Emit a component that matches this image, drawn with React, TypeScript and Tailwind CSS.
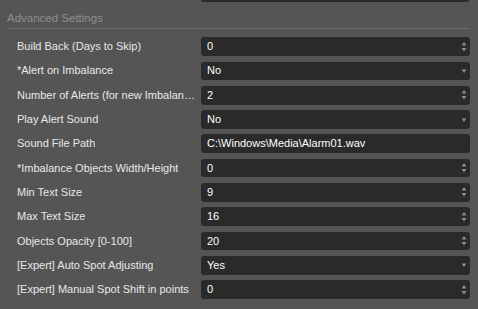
type Field = {
  label: string;
  value: string;
  kind: "spin" | "select" | "text";
};

const FIELDS: Field[] = [
  { label: "Build Back (Days to Skip)", value: "0", kind: "spin" },
  { label: "*Alert on Imbalance", value: "No", kind: "select" },
  { label: "Number of Alerts (for new Imbalances)", value: "2", kind: "spin" },
  { label: "Play Alert Sound", value: "No", kind: "select" },
  { label: "Sound File Path", value: "C:\\Windows\\Media\\Alarm01.wav", kind: "text" },
  { label: "*Imbalance Objects Width/Height", value: "0", kind: "spin" },
  { label: "Min Text Size", value: "9", kind: "spin" },
  { label: "Max Text Size", value: "16", kind: "spin" },
  { label: "Objects Opacity [0-100]", value: "20", kind: "spin" },
  { label: "[Expert] Auto Spot Adjusting", value: "Yes", kind: "select" },
  { label: "[Expert] Manual Spot Shift in points", value: "0", kind: "spin" },
];

function SpinArrows() {
  return (
    <svg width="6" height="12" viewBox="0 0 6 12" className="shrink-0">
      <path d="M0.5 4.5 L3 1 L5.5 4.5 Z" fill="#8c8c8c" />
      <path d="M0.5 7 L3 10.5 L5.5 7 Z" fill="#8c8c8c" />
    </svg>
  );
}

function SelectArrow() {
  return (
    <svg width="6" height="12" viewBox="0 0 6 12" className="shrink-0">
      <path d="M0.5 4.5 L3 8 L5.5 4.5 Z" fill="#8c8c8c" />
    </svg>
  );
}

function SettingRow({ field }: { field: Field }) {
  return (
    <div className="flex h-[24.3px] items-start">
      <div className="flex h-[18.7px] w-[201px] shrink-0 items-center pl-[17px] pr-[4px]">
        <span className="truncate text-[11px] leading-[13px] text-[#e8e8e8]">
          {field.label}
        </span>
      </div>
      <div className="flex h-[18.7px] w-[268.5px] items-center rounded-[3px] bg-[#2a2a2a] pl-[6px] pr-[3px]">
        <span className="flex-1 truncate text-[11px] leading-[13px] text-white">
          {field.value}
        </span>
        {field.kind === "spin" && <SpinArrows />}
        {field.kind === "select" && <SelectArrow />}
      </div>
    </div>
  );
}

export default function App() {
  return (
    <div
      className="h-[309px] w-[478px] overflow-hidden bg-[#555555]"
      style={{ fontFamily: '"Liberation Sans", Arial, sans-serif' }}
    >
      <div className="ml-[201px] h-[1.5px] w-[268px] rounded-b-[2px] bg-[#2a2a2a]" />
      <div className="ml-[7px] mt-[10.5px] h-[13px] text-[11.5px] leading-[13px] text-[#8e8e8e]">
        Advanced Settings
      </div>
      <div className="ml-[7px] mt-[3px] h-px w-[463px] bg-[#6c6c6c]" />
      <div className="mt-[8.3px] flex flex-col">
        {FIELDS.map((field) => (
          <SettingRow key={field.label} field={field} />
        ))}
      </div>
    </div>
  );
}
